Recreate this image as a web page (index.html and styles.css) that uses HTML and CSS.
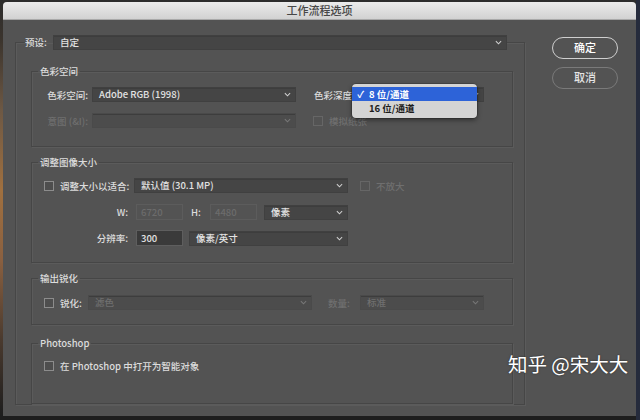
FILE: index.html
```html
<!DOCTYPE html>
<html lang="zh-CN">
<head>
<meta charset="utf-8">
<title>工作流程选项</title>
<link rel="stylesheet" href="styles.css">
</head>
<body>
<div class="desktop">
  <div class="window">
    <div class="titlebar">工作流程选项</div>
    <div class="wbody">
      <fieldset class="outer">
        <legend class="preset">
          <span class="plabel">预设:</span>
          <div class="select w-preset"><span class="val">自定</span><svg class="chev" viewBox="0 0 8 5"><polyline points="1,1 4,4 7,1"/></svg></div>
        </legend>

        <fieldset class="sec sec1">
          <legend>色彩空间</legend>
          <div class="row">
            <span class="lab lab-cs">色彩空间:</span>
            <div class="select w-cs"><span class="val">Adobe RGB (1998)</span><svg class="chev" viewBox="0 0 8 5"><polyline points="1,1 4,4 7,1"/></svg></div>
            <span class="lab lab-depth">色彩深度</span>
            <div class="select w-depth"><span class="val"></span><svg class="chev" viewBox="0 0 8 5"><polyline points="1,1 4,4 7,1"/></svg>
              <div class="popup">
                <div class="item on"><span class="check">✓</span>8 位/通道</div>
                <div class="item"><span class="check"></span>16 位/通道</div>
              </div>
            </div>
          </div>
          <div class="row row-gap">
            <span class="lab lab-cs dis">意图 (&amp;I):</span>
            <div class="select w-cs dis"><span class="val"></span><svg class="chev" viewBox="0 0 8 5"><polyline points="1,1 4,4 7,1"/></svg></div>
            <span class="cb dis cb-paper"></span>
            <span class="lab dis">模拟纸张</span>
          </div>
        </fieldset>

        <fieldset class="sec sec2">
          <legend>调整图像大小</legend>
          <div class="row">
            <span class="cb"></span>
            <span class="lab lab-fit">调整大小以适合:</span>
            <div class="select w-fit"><span class="val">默认值 (30.1 MP)</span><svg class="chev" viewBox="0 0 8 5"><polyline points="1,1 4,4 7,1"/></svg></div>
            <span class="cb dis cb-noup"></span>
            <span class="lab dis">不放大</span>
          </div>
          <div class="row row-in row-gap2">
            <span class="lab lab-right">W:</span>
            <span class="input dis">6720</span>
            <span class="lab lab-h">H:</span>
            <span class="input dis">4480</span>
            <div class="select w-unit"><span class="val">像素</span><svg class="chev" viewBox="0 0 8 5"><polyline points="1,1 4,4 7,1"/></svg></div>
          </div>
          <div class="row row-in row-gap3">
            <span class="lab lab-right">分辨率:</span>
            <span class="input">300</span>
            <div class="select w-res"><span class="val">像素/英寸</span><svg class="chev" viewBox="0 0 8 5"><polyline points="1,1 4,4 7,1"/></svg></div>
          </div>
        </fieldset>

        <fieldset class="sec sec3">
          <legend>输出锐化</legend>
          <div class="row">
            <span class="cb"></span>
            <span class="lab lab-sharp">锐化:</span>
            <div class="select w-sharp dis"><span class="val">滤色</span><svg class="chev" viewBox="0 0 8 5"><polyline points="1,1 4,4 7,1"/></svg></div>
            <span class="lab dis lab-amt">数量:</span>
            <div class="select w-amt dis"><span class="val">标准</span><svg class="chev" viewBox="0 0 8 5"><polyline points="1,1 4,4 7,1"/></svg></div>
          </div>
        </fieldset>

        <fieldset class="sec sec4">
          <legend>Photoshop</legend>
          <div class="row">
            <span class="cb"></span>
            <span class="lab">在 Photoshop 中打开为智能对象</span>
          </div>
        </fieldset>
      </fieldset>

      <div class="buttons">
        <div class="btn primary">确定</div>
        <div class="btn">取消</div>
      </div>
    </div>
  </div>
  <div class="watermark">知乎 @宋大大</div>
</div>
</body>
</html>
```

FILE: styles.css
```css
* { box-sizing: border-box; }
html, body { margin: 0; padding: 0; }
body {
  width: 640px;
  height: 420px;
  overflow: hidden;
  font-family: "Noto Sans CJK SC", "Noto Sans", sans-serif;
}
.desktop {
  position: relative;
  width: 640px;
  height: 420px;
  padding: 2px 4px 4px 3px;
  background:
    linear-gradient(to right, transparent 636px, #252b3c 636px),
    linear-gradient(to bottom, #2c2c2c 0, #3b342d 40px, #6d5844 110px, #a0703f 190px, #8a6040 260px, #4a3a2e 340px, #1e1e1e 415px);
}
.window {
  width: 633px;
  height: 414px;
  background: #535353;
  border-radius: 4px 4px 0 0;
  overflow: hidden;
  display: flex;
  flex-direction: column;
}
.titlebar {
  height: 18px;
  flex: none;
  background: linear-gradient(to bottom, #ebebeb, #d2d2d2);
  border-bottom: 1px solid #a9a9a9;
  color: #474747;
  font-size: 11px;
  font-weight: 500;
  line-height: 17px;
  text-align: center;
}
.wbody {
  display: flex;
  padding: 15px 0 0 12px;
}
fieldset {
  margin: 0;
  min-width: 0;
}
.outer {
  width: 510px;
  height: 370px;
  border: 1px solid #464646;
  box-shadow: inset 1px 1px 0 #5b5b5b, 1px 1px 0 #5b5b5b;
  padding: 14px 11px 0 15px;
}
.preset {
  display: flex;
  align-items: center;
  width: 482px;
  height: 15px;
  margin-left: -6px;
  padding: 0;
}
.plabel {
  width: 28px;
  font-size: 9.5px;
  font-weight: 500;
  color: #dcdcdc;
  line-height: 15px;
}
.select {
  position: relative;
  height: 15px;
  background: #454545;
  border: 1px solid #404040;
  box-shadow: inset 0 1px 0 #3d3d3d;
  display: flex;
  align-items: center;
  color: #e2e2e2;
  font-size: 9.5px;
  font-weight: 500;
  line-height: 13px;
  padding-left: 6px;
  flex: none;
}
.select .val { flex: 1; white-space: nowrap; }
.chev {
  width: 7px;
  height: 5px;
  margin-right: 4px;
  fill: none;
  stroke: #cfcfcf;
  stroke-width: 1.2;
}
.select.dis { background: #4c4c4c; border-color: #4a4a4a; color: #6f6f6f; }
.select.dis .chev { stroke: #777; }
.w-preset { width: 454px; }

.sec {
  width: 482px;
  border: 1px solid #464646;
  box-shadow: inset 1px 1px 0 #5b5b5b, 1px 1px 0 #5b5b5b;
  padding: 0;
}
.sec legend {
  margin-left: 6px;
  padding: 0 2px;
  font-size: 9.5px;
  font-weight: 500;
  line-height: 14px;
  color: #dcdcdc;
}
.sec1 { padding: 9px 0 18px; }
.sec2 { margin-top: 8px; padding: 9px 0 16px; }
.sec3 { margin-top: 8px; padding: 10px 0 14px; }
.sec4 { margin-top: 11px; padding: 8px 0 30px; }

.row {
  display: flex;
  align-items: center;
  height: 15px;
  padding-left: 12px;
}
.row-gap { margin-top: 11px; }
.row-in { height: 16px; }
.row-gap2 { margin-top: 11px; }
.row-gap3 { margin-top: 10px; }

.lab {
  font-size: 9.5px;
  font-weight: 500;
  color: #dcdcdc;
  white-space: nowrap;
  flex: none;
}
.lab.dis { color: #6f6f6f; }
.lab-cs { width: 44px; text-align: right; margin-right: 4px; }
.w-cs { width: 204px; }
.lab-depth { margin-left: 18px; width: 41px; }
.w-depth { width: 129px; }
.cb-paper { margin-left: 17px; margin-right: 6px; }

.cb {
  width: 10px;
  height: 10px;
  flex: none;
  border: 1px solid #8c8c8c;
  background: #4e4e4e;
  margin-right: 6px;
}
.cb.dis { border-color: #666; background: #535353; }
.lab-fit { width: 68px; margin-right: 6px; }
.w-fit { width: 214px; }
.cb-noup { margin-left: 12px; }

.lab-right { width: 84px; text-align: right; margin-right: 8px; }
.input {
  width: 47px;
  height: 16px;
  flex: none;
  background: #3a3a3a;
  border: 1px solid #5e5e5e;
  color: #e2e2e2;
  font-size: 9.5px;
  font-weight: 500;
  line-height: 14px;
  padding-left: 4px;
}
.input.dis { background: #535353; border-color: #5c5c5c; color: #6c6c6c; }
.lab-h { margin-left: 8px; width: 19px; }
.w-unit { width: 84px; margin-left: 7px; }
.w-res { width: 159px; margin-left: 6px; }

.lab-sharp { width: 22px; margin-right: 6px; }
.w-sharp { width: 224px; }
.lab-amt { margin-left: 16px; width: 32px; }
.w-amt { width: 124px; }

.popup {
  position: absolute;
  left: -4px;
  top: -4px;
  width: 125px;
  height: 34px;
  background: #d4d4d4;
  border-radius: 4px;
  box-shadow: 0 2px 5px rgba(0,0,0,0.45), 0 0 0 0.5px rgba(0,0,0,0.3);
  padding: 3px 0;
}
.item {
  height: 14px;
  display: flex;
  align-items: center;
  font-size: 9.5px;
  color: #1c1c1c;
  font-weight: 700;
}
.item.on { background: #2d63d8; color: #fff; }
.check { width: 17px; text-align: right; padding-right: 5px; }

.buttons {
  display: flex;
  flex-direction: column;
  gap: 8px;
  margin-left: 27px;
  margin-top: 2px;
}
.btn {
  width: 66px;
  height: 22px;
  border: 1.5px solid #7a7a7a;
  border-radius: 11px;
  color: #e4e4e4;
  font-size: 11px;
  font-weight: 500;
  line-height: 19px;
  text-align: center;
}
.btn.primary { border-color: #cfcfcf; color: #fff; }

.watermark {
  position: absolute;
  left: 508px;
  top: 350px;
  font-size: 19.5px;
  line-height: 28px;
  color: #fff;
  text-shadow: 0 0 2px rgba(0,0,0,0.5);
  white-space: nowrap;
}
```
